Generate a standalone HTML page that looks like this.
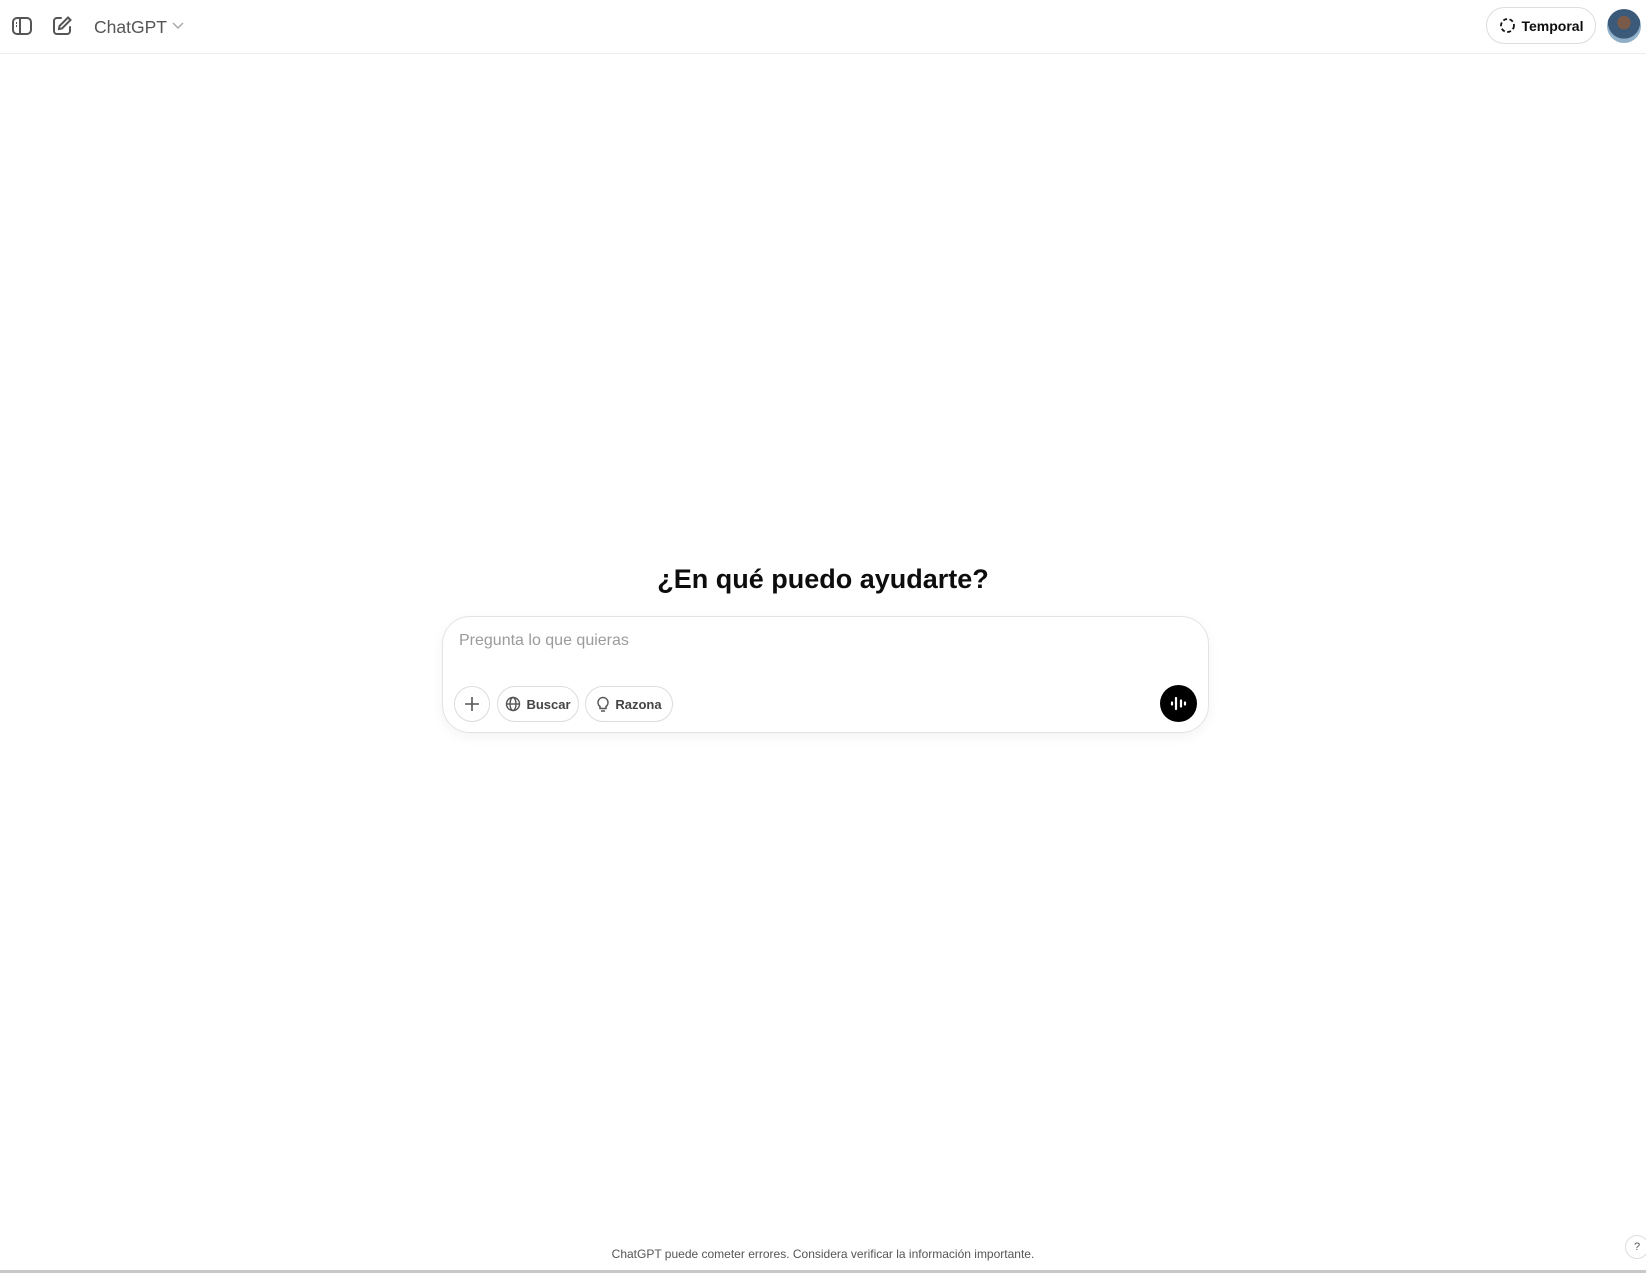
<!DOCTYPE html>
<html><head><meta charset="utf-8"><style>
*{box-sizing:border-box;margin:0;padding:0}
body{width:1646px;height:1276px;background:#fff;font-family:"Liberation Sans",sans-serif;position:relative;overflow:hidden;color:#0d0d0d}
.hdr{position:absolute;left:0;top:0;width:1646px;height:54px;border-bottom:1px solid #ededed}
.abs{position:absolute}
.pill{position:absolute;border:1px solid #dcdcdc;border-radius:20px;display:flex;align-items:center;justify-content:center;font-size:13px;color:#444;font-weight:bold}
</style></head><body>
<div class="hdr">
 <svg class="abs" style="left:11px;top:15px" width="22" height="22" viewBox="0 0 22 22" fill="none" stroke="#555" stroke-width="2"><rect x="2" y="3" width="18" height="16" rx="4"/><line x1="9" y1="3" x2="9" y2="19"/><line x1="5" y1="8" x2="6" y2="8"/><line x1="5" y1="11" x2="6" y2="11"/></svg>
 <svg class="abs" style="left:51px;top:15px" width="22" height="22" viewBox="0 0 22 22" fill="none" stroke="#555" stroke-width="2" stroke-linecap="round"><path d="M10 3H6a3 3 0 0 0-3 3v10a3 3 0 0 0 3 3h10a3 3 0 0 0 3-3v-4"/><path d="M17 2.5l2.5 2.5L11 13.5 8 14l.5-3z"/></svg>
 <div class="abs" style="left:94px;top:17px;font-size:17.5px;color:#555">ChatGPT</div>
 <svg class="abs" style="left:171px;top:20px" width="14" height="12" viewBox="0 0 14 12" fill="none" stroke="#aaa" stroke-width="1.5"><path d="M2 3l5 5 5-5"/></svg>
 <div class="pill" style="left:1486px;top:7px;width:110px;height:37px;font-size:14px;color:#0d0d0d;border-color:#ddd;border-radius:19px">
  <svg width="17" height="17" viewBox="0 0 17 17" style="margin-right:6px" fill="none" stroke="#111" stroke-width="1.8" stroke-dasharray="4 2.5"><circle cx="8.5" cy="8.5" r="6.5"/></svg>Temporal</div>
 <div class="abs" style="left:1607px;top:9px;width:34px;height:34px;border-radius:50%;background:radial-gradient(circle at 50% 40%,#7a5a48 0 25%,#3b5a7a 26% 60%,#8fb0c8 61%)"></div>
</div>
<div class="abs" style="left:0;width:1646px;top:564px;text-align:center;font-size:27px;font-weight:bold;color:#0d0d0d">¿En qué puedo ayudarte?</div>
<div class="abs" style="left:442px;top:616px;width:767px;height:117px;border:1px solid #e3e3e3;border-radius:28px;box-shadow:0 4px 12px rgba(0,0,0,0.05)">
 <div class="abs" style="left:16px;top:15px;font-size:16px;color:#9b9b9b">Pregunta lo que quieras</div>
 <div class="pill" style="left:11px;top:69px;width:36px;height:36px;border-radius:50%"><svg width="16" height="16" viewBox="0 0 16 16" stroke="#555" stroke-width="1.6"><path d="M8 1v14M1 8h14"/></svg></div>
 <div class="pill" style="left:54px;top:69px;width:82px;height:36px"><svg width="16" height="16" viewBox="0 0 16 16" fill="none" stroke="#555" stroke-width="1.4" style="margin-right:5px"><circle cx="8" cy="8" r="6.5"/><ellipse cx="8" cy="8" rx="3" ry="6.5"/><path d="M1.5 8h13"/></svg>Buscar</div>
 <div class="pill" style="left:142px;top:69px;width:88px;height:36px"><svg width="14" height="17" viewBox="0 0 14 17" fill="none" stroke="#555" stroke-width="1.5" style="margin-right:5px"><path d="M7 1.5a5 5 0 0 0-3 9v2h6v-2a5 5 0 0 0-3-9z"/><path d="M5 15h4"/></svg>Razona</div>
 <div class="abs" style="left:717px;top:68px;width:37px;height:37px;border-radius:50%;background:#000">
  <svg width="37" height="37" viewBox="0 0 37 37" stroke="#fff" stroke-width="2.2" stroke-linecap="round"><path d="M12 17.5v2M16 13v11M21 15.5v6M25 17.5v2"/></svg></div>
</div>
<div class="abs" style="left:0;width:1646px;top:1247px;text-align:center;font-size:12px;color:#555">ChatGPT puede cometer errores. Considera verificar la información importante.</div>
<div class="abs" style="left:1625px;top:1235px;width:24px;height:24px;border:1px solid #ddd;border-radius:50%;font-size:11px;color:#555;text-align:center;line-height:22px">?</div>
<div class="abs" style="left:0;top:1270px;width:1646px;height:3px;background:#c8c8c8"></div>
</body></html>
